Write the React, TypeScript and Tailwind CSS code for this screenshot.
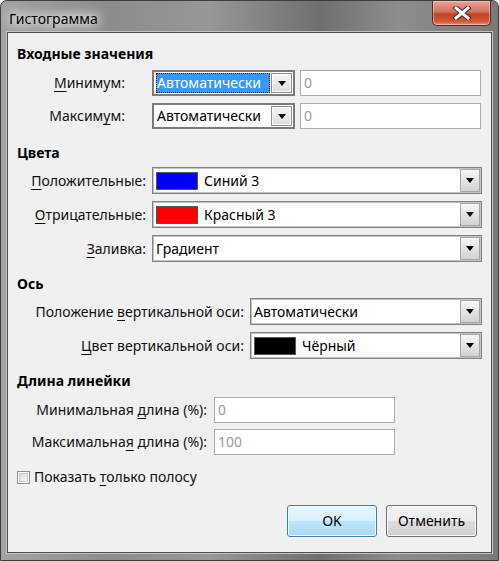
import React from "react";

const font = "font-['Segoe_UI','Noto_Sans','Open_Sans',sans-serif]";

function Arrow() {
  return (
    <svg width="8" height="5" viewBox="0 0 8 5" className="block">
      <path d="M0 0 H8 L4 5 Z" fill="#000" />
    </svg>
  );
}

function DropButton({ narrow }: { narrow?: boolean }) {
  return (
    <div
      className={
        narrow
          ? "flex h-full w-[21px] items-center justify-center border border-[#8e8e8e] bg-[linear-gradient(#f6f6f6,#dcdcdc)] shadow-[inset_0_0_0_1px_#fbfbfb]"
          : "flex h-[23px] w-[20px] items-center justify-center border border-[#a5a5a5] bg-[linear-gradient(#f7f7f7,#e4e4e4_50%,#d2d2d2)]"
      }
    >
      <Arrow />
    </div>
  );
}

function Combo({
  width,
  children,
  narrow,
  focused,
}: {
  width: string;
  children: React.ReactNode;
  narrow?: boolean;
  focused?: boolean;
}) {
  if (narrow) {
    return (
      <div className={`flex h-[26px] ${width} shrink-0 items-stretch border-2 border-[#7b7b7b] bg-white p-px`}>
        <div className="flex flex-1 items-center overflow-hidden px-px">
          <div
            className={
              focused
                ? "flex h-full w-full items-center whitespace-nowrap border border-dotted border-[#222] bg-[#3399ff] text-white"
                : "flex h-full w-full items-center whitespace-nowrap pl-px text-black"
            }
          >
            {children}
          </div>
        </div>
        <DropButton narrow />
      </div>
    );
  }
  return (
    <div
      className={`flex h-[27px] ${width} shrink-0 items-center border border-[#828282] bg-white pl-[3px] pr-px shadow-[inset_0_0_0_1px_#c4c4c4]`}
    >
      <div className="flex flex-1 items-center gap-[6px] text-black">{children}</div>
      <DropButton />
    </div>
  );
}

function Swatch({ color }: { color: string }) {
  return <div className={`h-[18px] w-[42px] border border-[#555] ${color}`} />;
}

function TextBox({ width, value }: { width: string; value: string }) {
  return (
    <div className={`flex h-[26px] ${width} shrink-0 items-center border border-[#ababab] bg-white pl-[3px] text-[#9a9a9a]`}>
      {value}
    </div>
  );
}

function Heading({ children, mt }: { children: React.ReactNode; mt: string }) {
  return <div className={`${mt} h-4 font-bold leading-4 text-black`}>{children}</div>;
}

function Row({
  label,
  labelWidth,
  gap,
  mt,
  children,
}: {
  label: React.ReactNode;
  labelWidth: string;
  gap: string;
  mt: string;
  children: React.ReactNode;
}) {
  return (
    <div className={`${mt} flex items-center ${gap}`}>
      <div className={`${labelWidth} shrink-0 whitespace-nowrap text-right text-[#111]`}>{label}</div>
      {children}
    </div>
  );
}

const U = ({ children }: { children: React.ReactNode }) => (
  <span className="underline decoration-1 underline-offset-[3px]">{children}</span>
);

export default function App() {
  return (
    <div className={`${font} text-[14px] leading-4`}>
      <div className="flex h-[561px] w-[499px] flex-col rounded-t-[7px] border border-[#3d3d3d] bg-[linear-gradient(90deg,#a3a3a3_0%,#8c8c8c_22%,#979797_42%,#6f6f6f_64%,#8d8d8d_80%,#7a7a7a_100%)]">
        {/* title bar */}
        <div className="flex h-[31px] shrink-0 items-start justify-between">
          <div className="pl-[8px] pt-[10px] text-black [text-shadow:0_0_8px_#fff,0_0_12px_#fff,0_0_16px_#fff]">
            Гистограмма
          </div>
          <div className="mr-[7px] flex h-[25px] w-[59px] items-center justify-center rounded-b-[5px] border border-t-0 border-[#5a2a22] bg-[linear-gradient(#e8a597,#d3715e_45%,#c2401f_55%,#cf5a3c_85%,#e28f74)] shadow-[inset_0_0_0_1px_rgba(255,220,210,0.5)]">
            <svg width="20" height="14" viewBox="0 0 20 14">
              <path d="M4 2 L16 12 M16 2 L4 12" stroke="#3d2b2b" strokeWidth="5" strokeLinecap="square" />
              <path d="M4 2 L16 12 M16 2 L4 12" stroke="#fff" strokeWidth="3" strokeLinecap="square" />
            </svg>
          </div>
        </div>
        {/* client area */}
        <div className="mx-[6px] mb-[7px] flex flex-1 flex-col border border-[#505050] bg-[#f0f0f0] pl-[9px] pr-[13px] shadow-[0_0_0_1px_#c2c2c2]">
          <Heading mt="mt-[13px]">Входные значения</Heading>
          <Row mt="mt-[8px]" labelWidth="w-[108px]" gap="gap-[27px]" label={<><U>М</U>инимум:</>}>
            <div className="flex gap-[5px]">
              <Combo width="w-[143px]" narrow focused>
                Автоматически
              </Combo>
              <TextBox width="w-[181px]" value="0" />
            </div>
          </Row>
          <Row mt="mt-[7px]" labelWidth="w-[108px]" gap="gap-[27px]" label={<>Максим<U>у</U>м:</>}>
            <div className="flex gap-[5px]">
              <Combo width="w-[143px]" narrow>
                Автоматически
              </Combo>
              <TextBox width="w-[181px]" value="0" />
            </div>
          </Row>

          <Heading mt="mt-[16px]">Цвета</Heading>
          <Row mt="mt-[6px]" labelWidth="w-[129px]" gap="gap-[6px]" label={<><U>П</U>оложительные:</>}>
            <Combo width="w-[330px]">
              <Swatch color="bg-[#0000ff]" />
              <span>Синий 3</span>
            </Combo>
          </Row>
          <Row mt="mt-[7px]" labelWidth="w-[129px]" gap="gap-[6px]" label={<><U>О</U>трицательные:</>}>
            <Combo width="w-[330px]">
              <Swatch color="bg-[#ff0000]" />
              <span>Красный 3</span>
            </Combo>
          </Row>
          <Row mt="mt-[7px]" labelWidth="w-[129px]" gap="gap-[6px]" label={<><U>З</U>аливка:</>}>
            <Combo width="w-[330px]">Градиент</Combo>
          </Row>

          <Heading mt="mt-[14px]">Ось</Heading>
          <Row mt="mt-[6px]" labelWidth="w-[227px]" gap="gap-[6px]" label={<>Положение <U>в</U>ертикальной оси:</>}>
            <Combo width="w-[232px]">Автоматически</Combo>
          </Row>
          <Row mt="mt-[7px]" labelWidth="w-[227px]" gap="gap-[6px]" label={<><U>Ц</U>вет вертикальной оси:</>}>
            <Combo width="w-[232px]">
              <Swatch color="bg-black" />
              <span>Чёрный</span>
            </Combo>
          </Row>

          <Heading mt="mt-[14px]">Длина линейки</Heading>
          <Row mt="mt-[8px]" labelWidth="w-[190px]" gap="gap-[7px]" label={<>Минимальная <U>д</U>лина (%):</>}>
            <TextBox width="w-[181px]" value="0" />
          </Row>
          <Row mt="mt-[6px]" labelWidth="w-[190px]" gap="gap-[7px]" label={<>Максимальна<U>я</U> длина (%):</>}>
            <TextBox width="w-[181px]" value="100" />
          </Row>

          <div className="mt-[14px] flex h-4 items-center gap-[4px] text-[#111]">
            <div className="flex h-[13px] w-[13px] items-center justify-center border border-[#8e8f8f] bg-white">
              <div className="h-[9px] w-[9px] border border-[#c9c9c9] bg-[linear-gradient(135deg,#dcdcdc,#f6f6f6)]" />
            </div>
            <span>
              Показать <U>т</U>олько полосу
            </span>
          </div>

          <div className="mt-[20px] flex justify-end gap-[9px] pr-px">
            <button className="h-[32px] w-[90px] rounded-[3px] border border-[#3c7fb1] bg-[linear-gradient(#eaf6fd,#d9f0fc_50%,#bee6fd_51%,#a7d9f5)] text-black shadow-[inset_0_0_0_1px_#f0f9ff]">
              OK
            </button>
            <button className="h-[32px] w-[91px] rounded-[3px] border border-[#707070] bg-[linear-gradient(#f2f2f2,#ebebeb_50%,#dddddd_51%,#cfcfcf)] text-black shadow-[inset_0_0_0_1px_#fbfbfb]">
              Отменить
            </button>
          </div>
        </div>
      </div>
    </div>
  );
}
